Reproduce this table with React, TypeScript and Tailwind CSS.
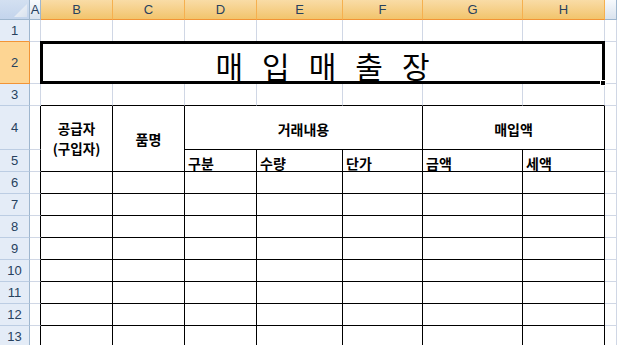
import React from 'react';

const GRID = 'border-r-[#d0d7e5]';
const GRIDB = 'border-b-[#d0d7e5]';

type CellProps = {
  rb?: boolean;
  bb?: boolean;
  className?: string;
  children?: React.ReactNode;
};

function Cell({ rb, bb, className = '', children }: CellProps) {
  return (
    <div
      className={`border-r border-b ${rb ? 'border-r-black' : GRID} ${bb ? 'border-b-black' : GRIDB} ${className}`}
    >
      {children}
    </div>
  );
}

function RowHead({ n, selected, nextSelected }: { n: number; selected?: boolean; nextSelected?: boolean }) {
  return (
    <div
      className={`flex items-center justify-center border-r border-b text-[13px] leading-none text-[#27415e] ${
        selected ? 'bg-[#fdd593] border-r-[#f29436]' : 'bg-[#e4ecf7] border-r-[#9eb6ce]'
      } ${selected || nextSelected ? 'border-b-[#f29436]' : 'border-b-[#bccde3]'}`}
      style={{ fontFamily: '"Liberation Sans", Arial, sans-serif' }}
    >
      {n}
    </div>
  );
}

function ColHead({ label, selected }: { label: string; selected?: boolean }) {
  return (
    <div
      className={`flex items-center justify-center border-r border-b text-[13px] leading-none text-[#27415e] ${
        selected
          ? 'bg-linear-to-b from-[#f9dca6] to-[#f2c46b] border-r-[#f5b04f] border-b-[#f29436]'
          : 'bg-linear-to-b from-[#f7fafd] to-[#dae3ee] border-r-[#9eb6ce] border-b-[#9eb6ce]'
      }`}
      style={{ fontFamily: '"Liberation Sans", Arial, sans-serif' }}
    >
      {label}
    </div>
  );
}

function DataRow({ n }: { n: number }) {
  return (
    <>
      <RowHead n={n} />
      <Cell rb />
      {[0, 1, 2, 3, 4, 5, 6].map((i) => (
        <Cell key={i} rb bb />
      ))}
      <Cell />
    </>
  );
}

export default function App() {
  const title = ['매', '입', '매', '출', '장'];
  const sub = ['구분', '수량', '단가', '금액', '세액'];

  return (
    <div
      className="w-[617px] h-[345px] overflow-hidden bg-white"
      style={{ fontFamily: '"Noto Sans CJK KR", "Noto Sans", sans-serif' }}
    >
      <div className="grid grid-cols-[30px_11px_72px_72px_72px_86px_80px_100px_82px_1fr] grid-rows-[20px_22px_42px_22px_44px_22px_22px_22px_22px_22px_22px_22px_22px_22px]">
        {/* header row */}
        <div className="relative border-r border-b border-r-[#9eb6ce] border-b-[#9eb6ce] bg-linear-to-b from-[#d3e0f1] to-[#c3d4ec]">
          <svg className="absolute right-[2px] bottom-[2px]" width="13" height="13" viewBox="0 0 13 13">
            <defs>
              <linearGradient id="tri" x1="0" y1="0" x2="1" y2="1">
                <stop offset="0" stopColor="#f3f6fa" />
                <stop offset="1" stopColor="#d9e2ee" />
              </linearGradient>
            </defs>
            <polygon points="13,0 13,13 0,13" fill="url(#tri)" />
          </svg>
        </div>
        <ColHead label="A" />
        {['B', 'C', 'D', 'E', 'F', 'G', 'H'].map((c) => (
          <ColHead key={c} label={c} selected />
        ))}
        <ColHead label="" />

        {/* row 1 */}
        <RowHead n={1} nextSelected />
        {[0, 1, 2, 3, 4, 5, 6, 7, 8].map((i) => (
          <Cell key={i} />
        ))}

        {/* row 2 */}
        <RowHead n={2} selected />
        <Cell />
        <Cell className="relative col-span-7 flex items-center justify-center gap-[19px] pt-[4px] text-[30px] font-normal leading-none text-black">
          {title.map((t, i) => (
            <span key={i}>{t}</span>
          ))}
          <div className="absolute left-[-1px] top-[-1px] right-[-1px] bottom-[-1px] border-[3px] border-black">
            <div className="absolute right-[-4px] bottom-[-5px] w-[6px] h-[6px] bg-black border border-white" />
          </div>
        </Cell>
        <Cell />

        {/* row 3 */}
        <RowHead n={3} />
        <Cell />
        {[0, 1, 2, 3, 4, 5, 6].map((i) => (
          <Cell key={i} bb />
        ))}
        <Cell />

        {/* row 4 */}
        <RowHead n={4} />
        <Cell rb />
        <Cell rb bb className="row-span-2 flex flex-col items-center justify-center text-[13.5px] font-bold leading-[19.5px] text-black">
          <span>공급자</span>
          <span>(구입자)</span>
        </Cell>
        <Cell rb bb className="row-span-2 flex items-center justify-center pt-[2px] text-[14px] font-bold text-black">
          품명
        </Cell>
        <Cell rb bb className="col-span-3 flex items-center justify-center pt-[4px] text-[14px] font-bold text-black">
          거래내용
        </Cell>
        <Cell rb bb className="col-span-2 flex items-center justify-center pt-[4px] text-[14px] font-bold text-black">
          매입액
        </Cell>
        <Cell />

        {/* row 5 */}
        <RowHead n={5} />
        <Cell rb />
        {sub.map((s) => (
          <Cell key={s} rb bb className="flex items-end pl-[3px] pb-[1px] text-[14px] font-bold leading-none text-black">
            {s}
          </Cell>
        ))}
        <Cell />

        {[6, 7, 8, 9, 10, 11, 12, 13].map((n) => (
          <DataRow key={n} n={n} />
        ))}
      </div>
    </div>
  );
}
